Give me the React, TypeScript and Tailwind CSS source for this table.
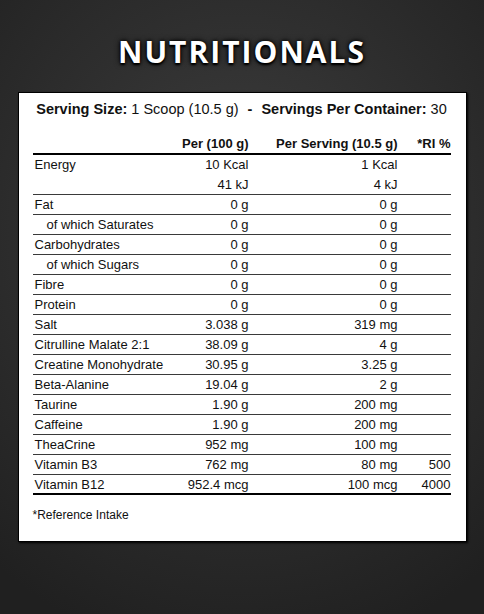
const rows: { name: string; per100: string[]; serving: string[]; ri?: string; sub?: boolean; last?: boolean }[] = [
  { name: "Energy", per100: ["10 Kcal", "41 kJ"], serving: ["1 Kcal", "4 kJ"] },
  { name: "Fat", per100: ["0 g"], serving: ["0 g"] },
  { name: "of which Saturates", per100: ["0 g"], serving: ["0 g"], sub: true },
  { name: "Carbohydrates", per100: ["0 g"], serving: ["0 g"] },
  { name: "of which Sugars", per100: ["0 g"], serving: ["0 g"], sub: true },
  { name: "Fibre", per100: ["0 g"], serving: ["0 g"] },
  { name: "Protein", per100: ["0 g"], serving: ["0 g"] },
  { name: "Salt", per100: ["3.038 g"], serving: ["319 mg"] },
  { name: "Citrulline Malate 2:1", per100: ["38.09 g"], serving: ["4 g"] },
  { name: "Creatine Monohydrate", per100: ["30.95 g"], serving: ["3.25 g"] },
  { name: "Beta-Alanine", per100: ["19.04 g"], serving: ["2 g"] },
  { name: "Taurine", per100: ["1.90 g"], serving: ["200 mg"] },
  { name: "Caffeine", per100: ["1.90 g"], serving: ["200 mg"] },
  { name: "TheaCrine", per100: ["952 mg"], serving: ["100 mg"] },
  { name: "Vitamin B3", per100: ["762 mg"], serving: ["80 mg"], ri: "500" },
  { name: "Vitamin B12", per100: ["952.4 mcg"], serving: ["100 mcg"], ri: "4000", last: true },
];

function Cell({ lines, className = "" }: { lines: string[]; className?: string }) {
  return (
    <div className={`flex flex-col ${className}`}>
      {lines.map((l, i) => (
        <span key={i} className="h-5 leading-[19px]">
          {l}
        </span>
      ))}
    </div>
  );
}

export default function App() {
  return (
    <div className="w-[484px] h-[614px] overflow-hidden flex flex-col items-center bg-[radial-gradient(ellipse_80%_70%_at_50%_38%,#3f3f3f_0%,#2f2f2f_50%,#202020_100%)] font-['Liberation_Sans',Arial,sans-serif]">
      <h1 className="pt-[34px] h-[70px] leading-[36px] text-[30px] font-bold tracking-[2px] text-white font-['Open_Sans',sans-serif] [text-shadow:0_0_3px_#000,0_0_6px_#000,0_2px_2px_#000]">
        NUTRITIONALS
      </h1>

      <div className="mt-[22px] w-[449px] bg-white border border-black shadow-[1px_1px_2px_#000] pl-[14px] pr-[15px] pt-2 pb-[18px] text-[#111]">
        <p className="text-center text-[14.5px] leading-4">
          <b>Serving Size:</b> 1 Scoop (10.5 g)
          <span className="mx-[9px] font-bold">-</span>
          <b>Servings Per Container:</b> 30
        </p>

        <div className="mt-[18px] text-[13px]">
          <div className="grid grid-cols-[130px_86px_149px_53px] h-5 leading-[18px] border-b-2 border-black font-bold">
            <span />
            <span className="text-right whitespace-nowrap">Per (100 g)</span>
            <span className="text-right">Per Serving (10.5 g)</span>
            <span className="text-right">*RI %</span>
          </div>

          {rows.map((r) => (
            <div
              key={r.name}
              className={`grid grid-cols-[130px_86px_149px_53px] overflow-hidden ${r.per100.length > 1 ? "h-10" : "h-5"} ${r.last ? "border-b-2 border-black" : "border-b border-[#3a3a3a]"}`}
            >
              <span className={`h-5 leading-[19px] whitespace-nowrap ${r.sub ? "pl-[14px]" : "pl-[2px]"}`}>{r.name}</span>
              <Cell lines={r.per100} className="text-right whitespace-nowrap" />
              <Cell lines={r.serving} className="text-right" />
              <span className="h-5 leading-[19px] text-right">{r.ri ?? ""}</span>
            </div>
          ))}
        </div>

        <p className="mt-3 text-[12px] leading-4">*Reference Intake</p>
      </div>
    </div>
  );
}
